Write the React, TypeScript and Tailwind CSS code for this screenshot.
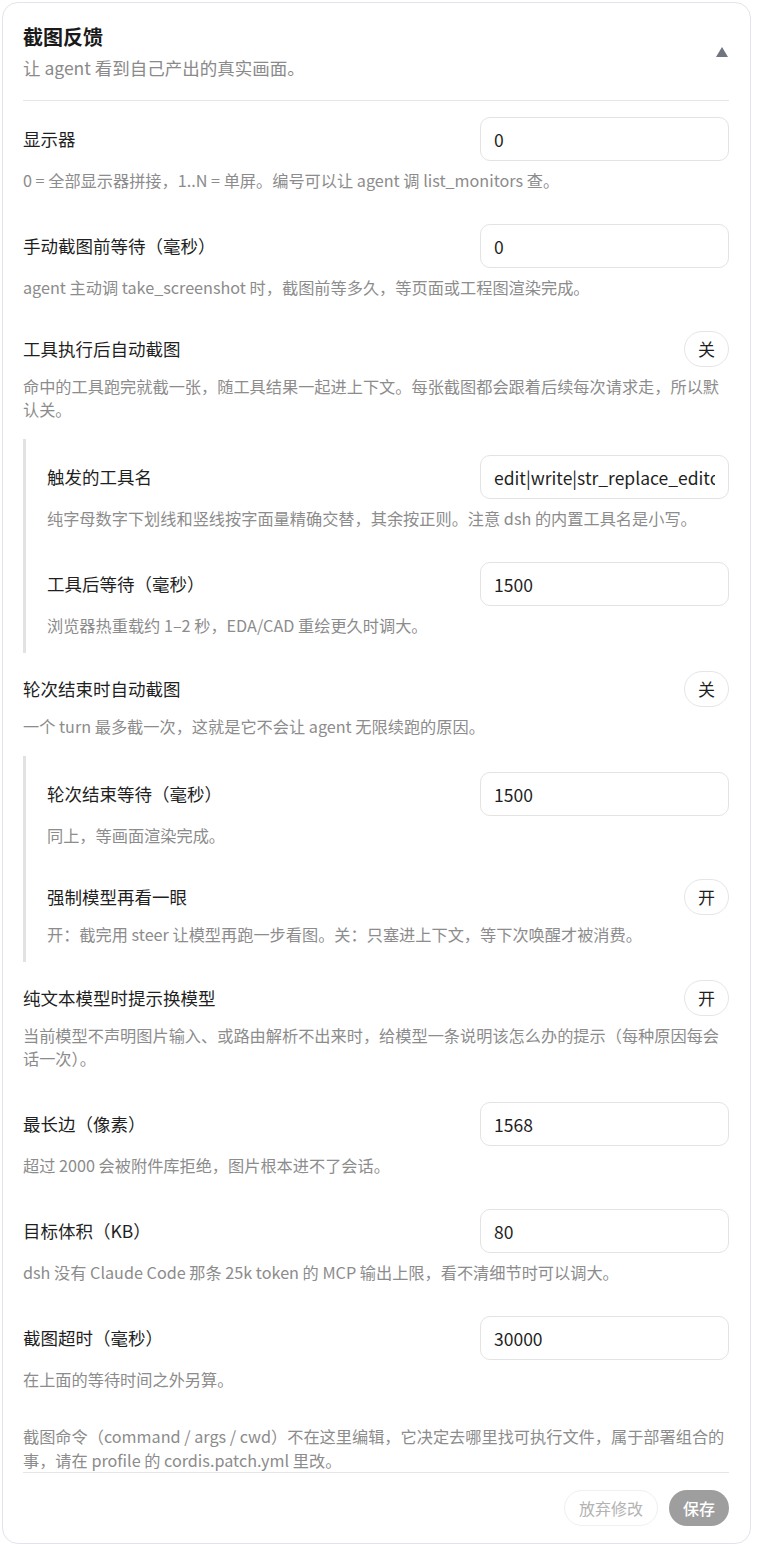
import { ReactNode } from "react";

const font = { fontFamily: '"Noto Sans CJK SC", "Noto Sans", sans-serif' };

const Help = ({ children }: { children: ReactNode }) => (
    <p className="mt-2 text-[16.2px] leading-[23px] text-[#8c8c8c]">{children}</p>
);

const InputRow = ({ label, value, help }: { label: string; value: string; help: string }) => (
    <div className="py-4">
        <div className="flex items-center">
            <span className="flex-1 text-[17.5px] text-[#1f1f1f]">{label}</span>
            <input
                readOnly
                value={value}
                className="w-[249px] h-[44px] rounded-[10px] border border-[#e3e3e3] bg-white px-[13px] text-[17.5px] text-[#1f1f1f] outline-none"
                style={font}
            />
        </div>
        <Help>{help}</Help>
    </div>
);

const ToggleRow = ({ label, on, help }: { label: string; on: boolean; help: string }) => (
    <div className="py-4">
        <div className="flex items-center">
            <span className="flex-1 text-[17.5px] text-[#1f1f1f]">{label}</span>
            <button className="h-[36px] w-[45px] rounded-full border border-[#e5e5e5] bg-white text-[17px] text-[#1f1f1f]">
                {on ? "开" : "关"}
            </button>
        </div>
        <Help>{help}</Help>
    </div>
);

const Group = ({ children }: { children: ReactNode }) => (
    <div className="my-[2px] border-l-[3px] border-[#e2e2e2] pl-[21px]">{children}</div>
);

export default function App() {
    return (
        <div className="bg-white pt-[2px] pl-[2px] pr-[9px]" style={font}>
            <div className="rounded-[16px] border border-[#e3e3ea] bg-white pl-[20px] pr-[21px]">
                <div className="flex items-center border-b border-[#e6e6e6] pt-[20px] pb-[19px]">
                    <div className="flex-1">
                        <h2 className="text-[20px] leading-[28px] font-bold text-[#1a1a1a]">截图反馈</h2>
                        <p className="mt-[4px] text-[17.5px] leading-[26px] text-[#8a8a8a]">
                            让 agent 看到自己产出的真实画面。
                        </p>
                    </div>
                    <svg width="12" height="10" viewBox="0 0 12 10" className="mr-[1px]">
                        <path d="M6 0 L12 10 L0 10 Z" fill="#707580" />
                    </svg>
                </div>

                <InputRow
                    label="显示器"
                    value="0"
                    help="0 = 全部显示器拼接，1..N = 单屏。编号可以让 agent 调 list_monitors 查。"
                />
                <InputRow
                    label="手动截图前等待（毫秒）"
                    value="0"
                    help="agent 主动调 take_screenshot 时，截图前等多久，等页面或工程图渲染完成。"
                />
                <ToggleRow
                    label="工具执行后自动截图"
                    on={false}
                    help="命中的工具跑完就截一张，随工具结果一起进上下文。每张截图都会跟着后续每次请求走，所以默认关。"
                />
                <Group>
                    <InputRow
                        label="触发的工具名"
                        value="edit|write|str_replace_editor"
                        help="纯字母数字下划线和竖线按字面量精确交替，其余按正则。注意 dsh 的内置工具名是小写。"
                    />
                    <InputRow
                        label="工具后等待（毫秒）"
                        value="1500"
                        help="浏览器热重载约 1–2 秒，EDA/CAD 重绘更久时调大。"
                    />
                </Group>
                <ToggleRow
                    label="轮次结束时自动截图"
                    on={false}
                    help="一个 turn 最多截一次，这就是它不会让 agent 无限续跑的原因。"
                />
                <Group>
                    <InputRow label="轮次结束等待（毫秒）" value="1500" help="同上，等画面渲染完成。" />
                    <ToggleRow
                        label="强制模型再看一眼"
                        on={true}
                        help="开：截完用 steer 让模型再跑一步看图。关：只塞进上下文，等下次唤醒才被消费。"
                    />
                </Group>
                <ToggleRow
                    label="纯文本模型时提示换模型"
                    on={true}
                    help="当前模型不声明图片输入、或路由解析不出来时，给模型一条说明该怎么办的提示（每种原因每会话一次）。"
                />
                <InputRow label="最长边（像素）" value="1568" help="超过 2000 会被附件库拒绝，图片根本进不了会话。" />
                <InputRow
                    label="目标体积（KB）"
                    value="80"
                    help="dsh 没有 Claude Code 那条 25k token 的 MCP 输出上限，看不清细节时可以调大。"
                />
                <InputRow label="截图超时（毫秒）" value="30000" help="在上面的等待时间之外另算。" />

                <p className="pt-[18px] text-[16.2px] leading-[23.5px] text-[#8c8c8c]">
                    截图命令（command / args / cwd）不在这里编辑，它决定去哪里找可执行文件，属于部署组合的事，请在 profile 的 cordis.patch.yml 里改。
                </p>

                <div className="flex items-center justify-end gap-[11px] border-t border-[#e6e6e6] pt-[17px] pb-[17px]">
                    <button className="h-[36px] rounded-full border border-[#efefef] bg-white px-[14px] text-[16px] text-[#b3b3b3]">
                        放弃修改
                    </button>
                    <button className="h-[36px] rounded-full bg-[#9e9e9e] px-[14px] text-[16px] font-medium text-white">
                        保存
                    </button>
                </div>
            </div>
        </div>
    );
}
